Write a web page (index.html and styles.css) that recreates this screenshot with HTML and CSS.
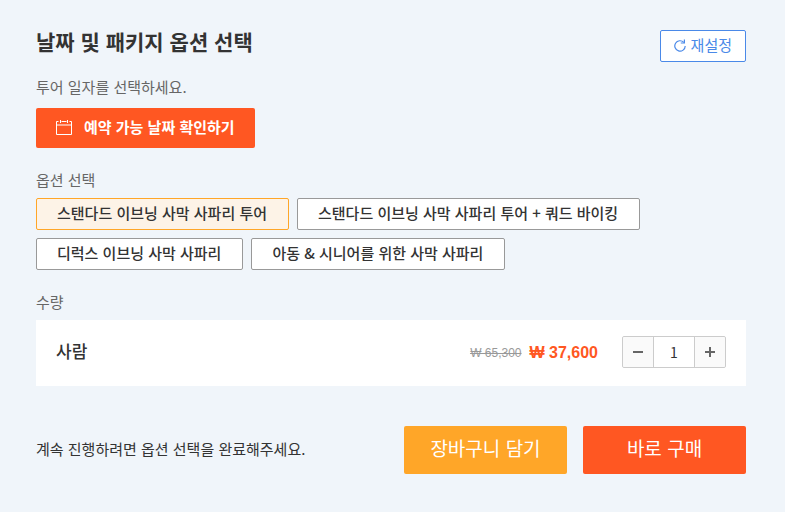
FILE: index.html
```
<!DOCTYPE html>
<html lang="ko">
<head>
  <meta charset="UTF-8" />
  <meta name="viewport" content="width=device-width, initial-scale=1.0"/>
  <title>날짜 및 패키지 옵션 선택</title>
  <link rel="stylesheet" href="styles.css">
</head>
<body>
  <main class="booking">
    <header class="booking-header">
      <h2>날짜 및 패키지 옵션 선택</h2>
      <button type="button" class="reset-btn">
        <svg width="14" height="14" viewBox="0 0 14 14" fill="none" stroke="currentColor" stroke-width="1.2">
          <path d="M10.8 4.4A5.2 5.2 0 1 0 12.2 8" />
          <path d="M11.4 1.6V5H7.8" />
        </svg>
        <span>재설정</span>
      </button>
    </header>

    <section class="date-section">
      <p class="label">투어 일자를 선택하세요.</p>
      <button type="button" class="date-btn">
        <svg width="16" height="16" viewBox="0 0 16 16" fill="none" stroke="currentColor">
          <path d="M2.5 2.5H.5V15.5H15.5V2.5H13.5M5.5 2.5H10.5" />
          <path d="M4.5 1V4M11.5 1V4" />
          <path d="M1 6H15" stroke-width="2" opacity=".5" />
        </svg>
        <span>예약 가능 날짜 확인하기</span>
      </button>
    </section>

    <section class="option-section">
      <p class="label">옵션 선택</p>
      <div class="options">
        <button type="button" class="option selected">스탠다드 이브닝 사막 사파리 투어</button>
        <button type="button" class="option">스탠다드 이브닝 사막 사파리 투어 + 쿼드 바이킹</button>
        <button type="button" class="option">디럭스 이브닝 사막 사파리</button>
        <button type="button" class="option">아동 &amp; 시니어를 위한 사막 사파리</button>
      </div>
    </section>

    <section class="quantity-section">
      <label class="label" for="quantity">수량</label>
      <div class="quantity-row">
        <span class="unit">사람</span>
        <del class="old-price">₩ 65,300</del>
        <strong class="price">₩ 37,600</strong>
        <div class="stepper">
          <button type="button" aria-label="빼기">
            <svg width="10" height="10" viewBox="0 0 10 10" stroke="currentColor" stroke-width="2"><path d="M0 5H10" /></svg>
          </button>
          <input type="text" id="quantity" value="1">
          <button type="button" aria-label="더하기">
            <svg width="10" height="10" viewBox="0 0 10 10" stroke="currentColor" stroke-width="2"><path d="M0 5H10M5 0V10" /></svg>
          </button>
        </div>
      </div>
    </section>

    <footer class="booking-footer">
      <p>계속 진행하려면 옵션 선택을 완료해주세요.</p>
      <button type="button" class="action cart">장바구니 담기</button>
      <button type="button" class="action buy">바로 구매</button>
    </footer>
  </main>
</body>
</html>
```
FILE: styles.css
```
* {
  box-sizing: border-box;
}

body {
  margin: 0;
  background: #f0f5fa;
  color: #333;
  font-family: "Noto Sans CJK KR", sans-serif;
  font-size: 15px;
  line-height: 20px;
}

h2, p {
  margin: 0;
}

button, input {
  font: inherit;
  color: inherit;
}

button {
  padding: 0;
  border: none;
  border-radius: 2px;
  cursor: pointer;
}

svg {
  display: block;
}

.booking {
  padding: 30px 39px 38px 36px;
}

.booking-header {
  display: flex;
  justify-content: space-between;
  height: 32px;
  margin-bottom: 15px;
}

h2 {
  font-size: 21px;
  font-weight: 700;
  line-height: 22px;
}

.reset-btn {
  display: flex;
  align-items: center;
  gap: 4px;
  padding: 0 13px 2px 12px;
  border: 1px solid #4a89e8;
  background: #fff;
  color: #4a89e8;
}

.label {
  display: block;
  margin-bottom: 8px;
  color: #666;
}

.date-section {
  margin-bottom: 22px;
}

.date-section .label {
  margin-bottom: 11px;
}

.date-btn {
  display: flex;
  align-items: center;
  gap: 12px;
  height: 40px;
  padding: 0 20px 2px;
  background: #ff5722;
  color: #fff;
  font-weight: 700;
}

.option-section {
  margin-bottom: 22px;
}

.options {
  display: flex;
  flex-wrap: wrap;
  gap: 8px;
}

.option {
  height: 32px;
  padding: 0 21px 3px 20px;
  border: 1px solid #999;
  background: #fff;
  font-weight: 500;
}

.option.selected {
  border-color: #ffa628;
  background: #fdf3e7;
}

.quantity-section {
  margin-bottom: 40px;
}

.quantity-row {
  display: flex;
  align-items: center;
  padding: 16px 20px 18px;
  background: #fff;
}

.unit {
  flex: 1;
  padding-bottom: 3px;
  font-size: 17px;
  font-weight: 500;
}

.old-price,
.price {
  padding-top: 2px;
  font-family: "Liberation Sans", sans-serif;
}

.old-price {
  margin-right: 8px;
  color: #999;
  font-size: 12px;
}

.price {
  margin-right: 24px;
  color: #ff5722;
  font-size: 16px;
}

.stepper {
  display: flex;
  height: 32px;
  border: 1px solid #ccc;
  border-radius: 2px;
}

.stepper button {
  display: flex;
  align-items: center;
  justify-content: center;
  width: 30px;
  background: #fafafa;
  color: #666;
}

.stepper input {
  width: 42px;
  padding: 0;
  border: solid #ccc;
  border-width: 0 1px;
  text-align: center;
  font-size: 14px;
}

.booking-footer {
  display: flex;
  align-items: center;
  gap: 16px;
}

.booking-footer p {
  flex: 1;
  padding-bottom: 2px;
}

.action {
  width: 163px;
  height: 48px;
  padding-bottom: 4px;
  color: #fff;
  font-size: 19px;
}

.cart {
  background: #ffa628;
}

.buy {
  background: #ff5722;
}
```
